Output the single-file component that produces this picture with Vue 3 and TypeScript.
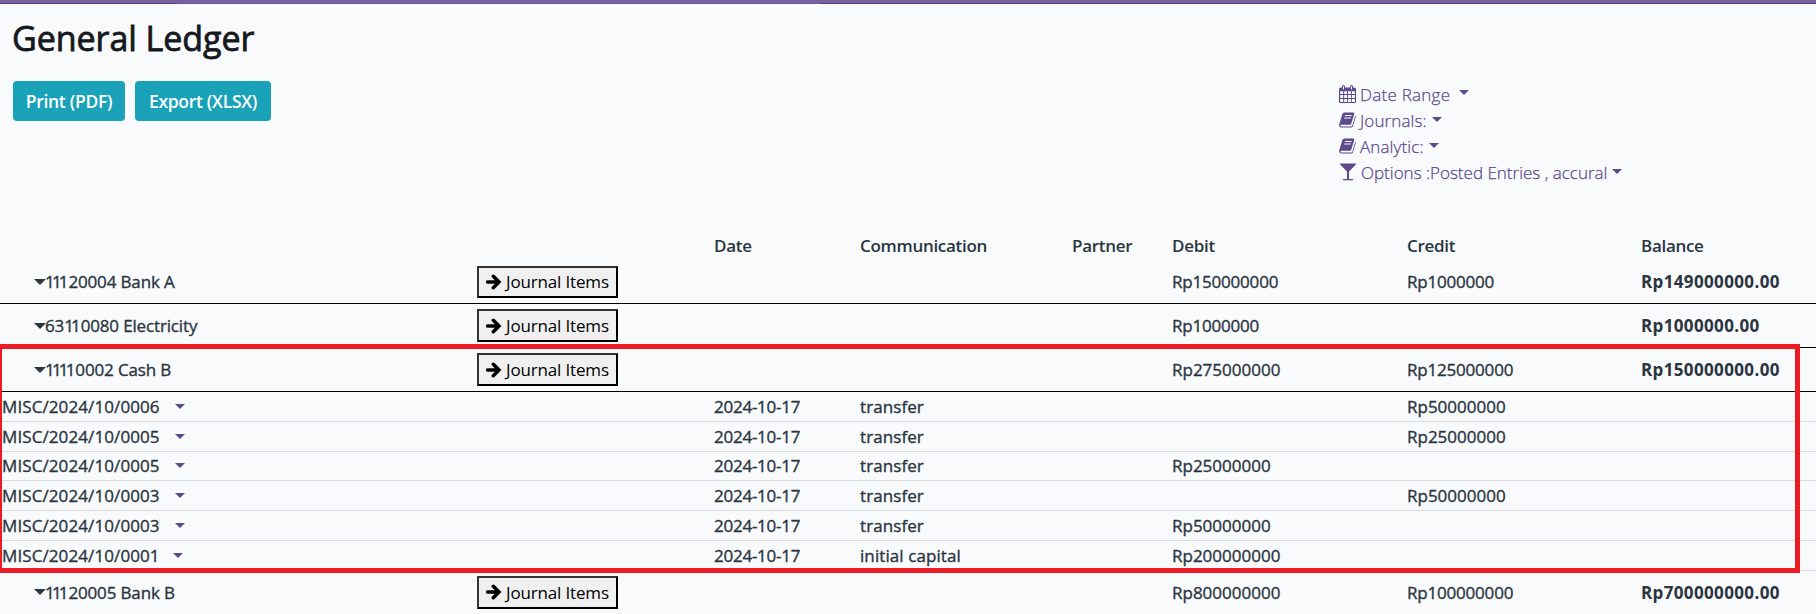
<script setup lang="ts">
interface Entry {
  name: string
  communication: string
  debit?: string
  credit?: string
}
interface Account {
  name: string
  debit: string
  credit?: string
  balance: string
  entries?: Entry[]
}

const cashEntries: Entry[] = [
  { name: 'MISC/2024/10/0006', communication: 'transfer', credit: 'Rp50000000' },
  { name: 'MISC/2024/10/0005', communication: 'transfer', credit: 'Rp25000000' },
  { name: 'MISC/2024/10/0005', communication: 'transfer', debit: 'Rp25000000' },
  { name: 'MISC/2024/10/0003', communication: 'transfer', credit: 'Rp50000000' },
  { name: 'MISC/2024/10/0003', communication: 'transfer', debit: 'Rp50000000' },
  { name: 'MISC/2024/10/0001', communication: 'initial capital', debit: 'Rp200000000' },
]

const accounts: Account[] = [
  { name: '11120004 Bank A', debit: 'Rp150000000', credit: 'Rp1000000', balance: 'Rp149000000.00' },
  { name: '63110080 Electricity', debit: 'Rp1000000', balance: 'Rp1000000.00' },
  { name: '11110002 Cash B', debit: 'Rp275000000', credit: 'Rp125000000', balance: 'Rp150000000.00', entries: cashEntries },
  { name: '11120005 Bank B', debit: 'Rp800000000', credit: 'Rp100000000', balance: 'Rp700000000.00' },
]

// Splits off every 1 that stands before another 1, so the pair can be kerned.
const kerned = (text: string): string[] => text.split(/(1(?=1))/).filter((part) => part !== '')

// An amount whose first digit is 1 is set slightly tighter.
const startsWithOne = (amount?: string): boolean => amount?.startsWith('Rp1') ?? false
</script>

<template>
  <div class="page">
    <div class="topbar"><i></i><i></i><i></i></div>
    <h1>General Ledger</h1>
    <div class="controls">
      <div class="actions">
        <button class="primary print">Print (PDF)</button>
        <button class="primary export">Export (XLSX)</button>
      </div>
      <div class="filters">
        <a class="range">
          <svg width="18" height="18" viewBox="0 0 18 18">
            <path fill="currentColor" fill-rule="evenodd" d="M1.500 2.500H3V1.500Q3 0 4.500 0T6 1.500V2.500H11V1.500Q11 0 12.500 0T14 1.500V2.500H15.500Q17 2.500 17 4V16.500Q17 18 15.500 18H1.500Q0 18 0 16.500V4Q0 2.500 1.500 2.500ZM4 1.200V4.500H5V1.200ZM12 1.200V4.500H13V1.200ZM1.200 6.200V9H4.200V6.200ZM5.200 6.200V9H8.100V6.200ZM9 6.200V9H11.900V6.200ZM12.800 6.200V9H15.900V6.200ZM1.200 9.900V13H4.200V9.900ZM5.200 9.900V13H8.100V9.900ZM9 9.900V13H11.900V9.900ZM12.800 9.900V13H15.900V9.900ZM1.200 13.900V16.900H4.200V13.900ZM5.200 13.900V16.900H8.100V13.900ZM9 13.900V16.900H11.900V13.900ZM12.800 13.900V16.900H15.900V13.900Z" />
          </svg>
          <span>Date Range</span><b class="caret"></b>
        </a>
        <a v-for="label in ['Journals:', 'Analytic:']" :key="label" class="book">
          <svg width="18" height="18" viewBox="0 0 18 18">
            <path fill="currentColor" fill-rule="evenodd" d="M5.300 1.500H14.200Q15.500 1.500 15.200 2.900L12.200 12.800Q11.900 13.800 10.900 13.800H2Q1.200 14 1.600 15Q1.900 15.500 2.700 15.500H12.200Q13.100 15.500 13.400 14.600L16.200 4.700Q17 5 16.700 6L13.900 15.500Q13.500 16.600 12.200 16.600H2.600Q.8 16.600.2 15Q-.1 14 .3 13L3.400 3Q3.900 1.500 5.300 1.500ZM6.100 4L5.800 4.900H12.500L12.800 4ZM5.400 6.500L5.100 7.400H11.800L12.100 6.500Z" />
          </svg>
          <span>{{ label }}</span><b class="caret"></b>
        </a>
        <a class="options">
          <svg width="18" height="18" viewBox="0 0 18 18">
            <path fill="currentColor" d="M1.500 .5H16.500Q17.500.8 16.700 1.700L10 8.500V16H13.200Q14.200 16 14.200 17.200H3.800Q3.800 16 4.800 16H8V8.500L1.300 1.700Q.5.8 1.500.5Z" />
          </svg>
          <span>Options :Posted Entries , accural</span><b class="caret"></b>
        </a>
      </div>
    </div>

    <div class="ledger">
      <div class="row head">
        <span></span><span></span><span>Date</span><span>Communication</span>
        <span>Partner</span><span>Debit</span><span>Credit</span><span>Balance</span>
      </div>
      <template v-for="account in accounts" :key="account.name">
        <div class="row account">
          <span class="name"><b class="caret"></b><span><span v-for="(part, i) in kerned(account.name)" :key="i" :class="{ pair: part === '1' }">{{ part }}</span></span></span>
          <span>
            <button class="items">
              <svg width="16" height="16" viewBox="0 0 16 16">
                <path d="M1.600 8H13M7.300 2.300L13 8L7.300 13.700" fill="none" stroke="currentColor" stroke-width="3.500" stroke-linecap="round" />
              </svg>
              <span>Journal Items</span>
            </button>
          </span>
          <span></span><span></span><span></span>
          <span :class="{ tight: startsWithOne(account.debit) }">{{ account.debit }}</span>
          <span :class="{ tight: startsWithOne(account.credit) }">{{ account.credit }}</span>
          <span class="balance">{{ account.balance }}</span>
        </div>
        <div v-if="account.entries" class="entries">
          <div v-for="(entry, i) in account.entries" :key="i" class="row entry">
            <span class="move">{{ entry.name }}<b class="caret"></b></span>
            <span></span>
            <span class="date">2024-10-17</span>
            <span class="comm">{{ entry.communication }}</span>
            <span></span>
            <span>{{ entry.debit }}</span>
            <span>{{ entry.credit }}</span>
            <span></span>
          </div>
        </div>
      </template>
    </div>
    <div class="highlight"></div>
  </div>
</template>

<style>
body { margin: 0; background: #f8fafc; overflow: hidden; }
</style>

<style scoped>
.page {
  position: relative;
  width: 1816px;
  height: 614px;
  overflow: hidden;
  background: #f8fafc;
  color: #2b353e;
  font-family: "Open Sans", "Noto Sans", sans-serif;
  font-size: 17px;
}
.topbar { height: 4px; display: grid; grid-template-columns: 177px 644px 1fr; background: #7663a3; }
.topbar i { border-bottom: 1px solid #4b3d82; }
.topbar i:nth-child(2) { border-color: #6b599a; }
h1 {
  margin: 0;
  padding: 11px 0 0 12px;
  height: 66px;
  box-sizing: border-box;
  font-size: 34px;
  line-height: 47px;
  font-weight: 400;
  letter-spacing: -0.05px;
  color: #15191d;
  -webkit-text-stroke: 0.8px #15191d;
}
.controls { display: flex; height: 161px; padding-left: 13px; box-sizing: border-box; }
.actions { display: flex; gap: 10px; width: 1326px; padding-top: 11px; align-items: flex-start; }
.primary {
  height: 40px;
  padding: 0;
  border: 0;
  border-radius: 4px;
  background: #19a2b8;
  color: #fff;
  font: 600 17.5px "Open Sans", "Noto Sans", sans-serif;
  letter-spacing: -0.3px;
  white-space: nowrap;
}
.print { width: 112px; }
.export { width: 136px; }
.filters { padding-top: 11px; color: #5c4a8c; font-weight: 300; -webkit-text-stroke: 0.25px #5c4a8c; }
.filters a { display: flex; align-items: center; height: 26px; white-space: nowrap; }
.filters svg { margin-right: 3px; flex: none; }
.filters .caret { margin-left: 5px; margin-top: -1px; }
.filters .range { letter-spacing: 0.25px; }
.filters .range .caret { margin-left: 9px; margin-top: -3px; }
.filters .book { letter-spacing: 0.12px; }
.filters .options svg { margin-right: 4px; }
.caret {
  display: inline-block;
  flex: none;
  width: 0;
  height: 0;
  border: 5px solid transparent;
  border-top-color: currentColor;
  border-bottom: 0;
}
.row {
  display: grid;
  grid-template-columns: 477px 237px 146px 212px 100px 235px 234px 1fr;
  align-items: center;
  white-space: nowrap;
  -webkit-text-stroke: 0.35px currentColor;
}
.head { height: 29px; line-height: 29px; font-weight: 600; letter-spacing: -0.3px; -webkit-text-stroke: 0; }
.account { height: 44px; border-bottom: 1px solid #000; box-sizing: border-box; }
.name { display: flex; align-items: center; padding-left: 34px; letter-spacing: -0.15px; }
.name .caret { border-width: 6px 6px 0; margin-right: -1px; }
.pair { letter-spacing: -2.8px; }
.tight { letter-spacing: -0.2px; }
.items {
  display: flex;
  align-items: center;
  width: 141px;
  height: 33px;
  padding: 0 0 0 7px;
  box-sizing: border-box;
  border: 2px solid;
  border-color: #333 #000 #000 #333;
  border-radius: 0;
  background: #f0f0f0;
  color: #000;
  font: 400 17px "Open Sans", "Noto Sans", sans-serif;
  letter-spacing: -0.16px;
  -webkit-text-stroke: 0;
}
.items svg { margin-right: 4px; flex: none; }
.head + .account .items { height: 32px; }
.entry { height: 29.8px; border-bottom: 1px solid #dadde1; box-sizing: border-box; }
.move { padding-left: 2px; letter-spacing: 0.1px; }
.move .caret { color: #5c4a8c; margin-left: 15px; vertical-align: 4px; }
.entry:last-child .move .caret { margin-left: 13px; }
.date { letter-spacing: -0.25px; }
.comm { letter-spacing: 0.08px; }
.balance { font-weight: 700; letter-spacing: 0.36px; -webkit-text-stroke: 0; }
.highlight {
  position: absolute;
  left: 0;
  top: 344px;
  width: 1800px;
  height: 229px;
  box-sizing: border-box;
  border: 5px solid #ed1c24;
  border-left-width: 2px;
}
</style>
